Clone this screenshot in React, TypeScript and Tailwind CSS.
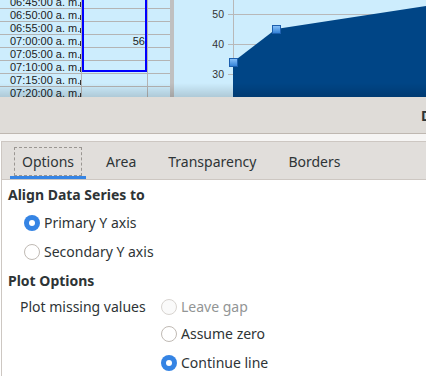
import React from 'react';

const times = [
  '06:45:00 a. m.',
  '06:50:00 a. m.',
  '06:55:00 a. m.',
  '07:00:00 a. m.',
  '07:05:00 a. m.',
  '07:10:00 a. m.',
  '07:15:00 a. m.',
  '07:20:00 a. m.',
];

function Sheet() {
  return (
    <div className="relative w-[170px] h-full overflow-hidden bg-[#cdedfd] font-['Liberation_Sans',sans-serif] text-[11px] text-[#1c1c1c]">
      <div className="-mt-[4px] flex flex-col">
        {times.map((t, i) => (
          <div key={t} className="flex h-[13px] border-b border-[#b4b4b4]">
            <div className="relative w-[82px] border-r border-[#b4b4b4] pl-[10px] leading-[12px] whitespace-nowrap">
              {t}
              <span className="absolute right-0 bottom-[1px] h-[5px] w-px bg-[#333]" />
            </div>
            <div className="w-[66px] border-r border-[#b4b4b4] pr-[2px] text-right leading-[12px]">
              {i === 3 ? '56' : ''}
            </div>
            <div className="flex-1" />
          </div>
        ))}
      </div>
      <div className="absolute left-[82px] top-[-2px] h-[74px] w-[65px] border-2 border-[#0000ff]" />
    </div>
  );
}

function Chart() {
  return (
    <div className="flex-1 h-full bg-[#cdedfd]">
      <svg width="252" height="97" viewBox="0 0 252 97">
        <defs>
          <linearGradient id="mk" x1="0" y1="0" x2="0" y2="1">
            <stop offset="0" stopColor="#8cc4fa" />
            <stop offset="1" stopColor="#2f7fd6" />
          </linearGradient>
        </defs>
        {[14, 44, 74].map((y) => (
          <line key={y} x1="54" y1={y + 0.5} x2="252" y2={y + 0.5} stroke="#b8b8b8" strokeWidth="1" />
        ))}
        <line x1="59.5" y1="0" x2="59.5" y2="97" stroke="#b8b8b8" strokeWidth="1" />
        {[
          ['50', 14],
          ['40', 44],
          ['30', 74],
        ].map(([l, y]) => (
          <text
            key={l}
            x="50"
            y={(y as number) + 4}
            textAnchor="end"
            fontFamily="Liberation Sans, sans-serif"
            fontSize="10.5"
            fill="#333"
          >
            {l}
          </text>
        ))}
        <polygon points="59,62 102,29 252,6 252,97 59,97" fill="#004586" />
        <rect x="55.5" y="58.5" width="8" height="8" fill="url(#mk)" stroke="#1d5fae" />
        <rect x="98.5" y="25.5" width="8" height="8" fill="url(#mk)" stroke="#1d5fae" />
      </svg>
    </div>
  );
}

function Radio({ checked, disabled, label }: { checked?: boolean; disabled?: boolean; label: string }) {
  return (
    <div className="flex items-center gap-[4px]">
      {checked ? (
        <span className="flex h-[16px] w-[16px] items-center justify-center rounded-full bg-[#3584e4]">
          <span className="h-[6px] w-[6px] rounded-full bg-white" />
        </span>
      ) : (
        <span
          className={
            disabled
              ? 'h-[16px] w-[16px] rounded-full border border-[#d8d4d0] bg-[#fafafa]'
              : 'h-[16px] w-[16px] rounded-full border border-[#c0bab4] bg-white'
          }
        />
      )}
      <span className={disabled ? 'text-[#929595]' : 'text-[#2e3436]'}>{label}</span>
    </div>
  );
}

const tabs = ['Options', 'Area', 'Transparency', 'Borders'];

export default function App() {
  return (
    <div className="w-[426px] h-[376px] overflow-hidden bg-white font-['Noto_Sans',sans-serif] text-[14px] text-[#2e3436]">
      <div className="relative flex h-[97px] overflow-hidden">
        <Sheet />
        <div className="w-[4px] h-full bg-[#c0c0c0]" />
        <Chart />
        <div className="pointer-events-none absolute bottom-0 left-0 right-0 h-[14px] bg-gradient-to-b from-transparent to-black/15" />
      </div>

      <div className="h-[37px] overflow-hidden border-b border-[#bfb8b1] bg-[#dfdcd8] flex items-center">
        <span className="pl-[421px] font-bold whitespace-nowrap">Data Series</span>
      </div>
      <div className="h-[7px] bg-[#f6f5f4]" />

      <div className="ml-[1px] border-l border-t border-[#cdc7c2]">
        <div className="flex h-[38px] gap-[8px] border-b border-[#cdc7c2] bg-[#e1dedb] pl-[8px]">
          {tabs.map((t, i) => (
            <div key={t} className="flex flex-col px-[4px] pt-[5px]">
              <div
                className={
                  i === 0
                    ? 'flex h-[29px] items-center border border-dashed border-[#9a9692] px-[7px]'
                    : 'flex h-[29px] items-center px-[8px]'
                }
              >
                {t}
              </div>
              <div className={i === 0 ? '-mx-[4px] h-[3px] bg-[#3584e4]' : 'h-[3px]'} />
            </div>
          ))}
        </div>

        <div className="bg-white pl-[6px]">
          <div className="flex h-[28px] items-center font-bold">Align Data Series to</div>
          <div className="flex h-[29px] items-center pl-[16px]">
            <Radio checked label="Primary Y axis" />
          </div>
          <div className="flex h-[29px] items-center pl-[16px]">
            <Radio label="Secondary Y axis" />
          </div>
          <div className="flex h-[28px] items-center font-bold">Plot Options</div>
          <div className="flex">
            <div className="w-[153px] pl-[12px] h-[25px] flex items-center">Plot missing values</div>
            <div className="flex flex-col">
              <div className="flex h-[25px] items-center">
                <Radio disabled label="Leave gap" />
              </div>
              <div className="flex h-[29px] items-center">
                <Radio label="Assume zero" />
              </div>
              <div className="flex h-[29px] items-center">
                <Radio checked label="Continue line" />
              </div>
            </div>
          </div>
        </div>
      </div>
    </div>
  );
}
